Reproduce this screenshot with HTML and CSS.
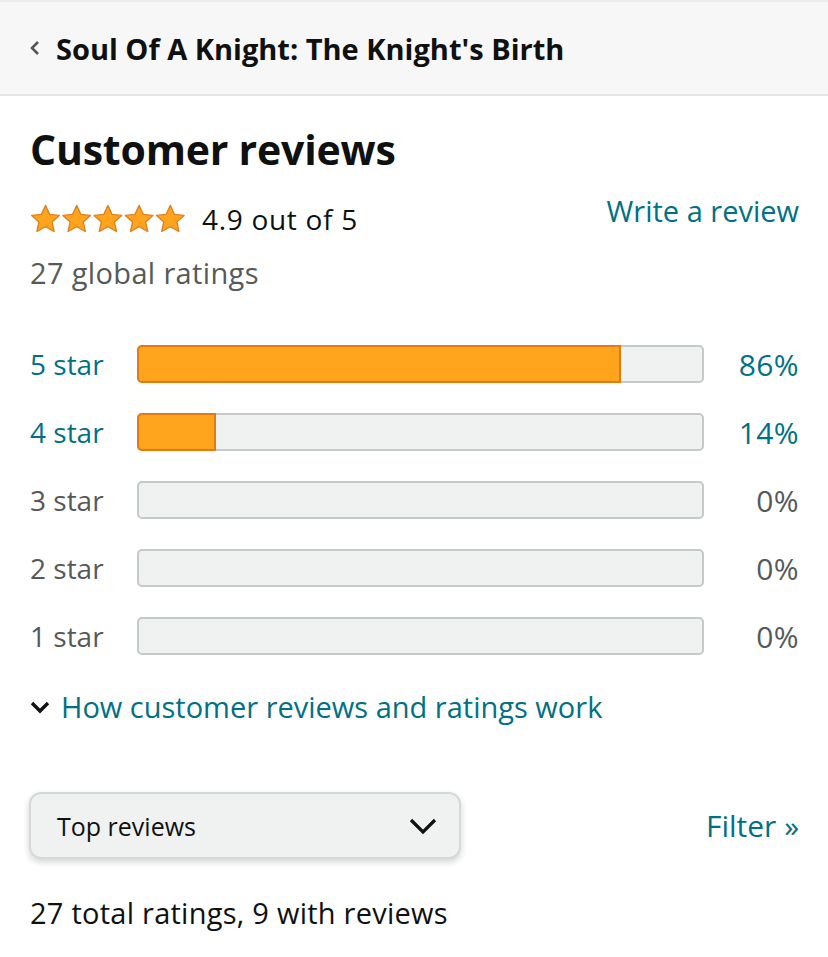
FILE: index.html
```html
<!DOCTYPE html>
<html>
<head>
<meta charset="utf-8">
<link rel="stylesheet" href="styles.css">
</head>
<body>
<header class="topbar">
  <svg class="back" width="12" height="18" viewBox="0 0 12 18"><path d="M9 3 L3 9 L9 15" fill="none" stroke="#555" stroke-width="2.6"/></svg>
  <span class="topbar-title">Soul Of A Knight: The Knight's Birth</span>
</header>
<main class="content">
  <h1 class="heading">Customer reviews</h1>
  <div class="summary">
    <div class="summary-left">
      <div class="rating-line">
        <span class="stars">
          <svg width="156" height="31" viewBox="0 0 156 31">
            <defs>
              <path id="st" d="M15.5 1.5 L19.6 10.4 L29.3 11.4 L22 17.9 L24.1 27.5 L15.5 22.6 L6.9 27.5 L9 17.9 L1.7 11.4 L11.4 10.4 Z"/>
            </defs>
            <use href="#st" x="0" fill="#ffa41c" stroke="#e0801e" stroke-width="1.4" stroke-linejoin="round"/>
            <use href="#st" x="31.2" fill="#ffa41c" stroke="#e0801e" stroke-width="1.4" stroke-linejoin="round"/>
            <use href="#st" x="62.4" fill="#ffa41c" stroke="#e0801e" stroke-width="1.4" stroke-linejoin="round"/>
            <use href="#st" x="93.6" fill="#ffa41c" stroke="#e0801e" stroke-width="1.4" stroke-linejoin="round"/>
            <use href="#st" x="124.8" fill="#ffa41c" stroke="#e0801e" stroke-width="1.4" stroke-linejoin="round"/>
          </svg>
        </span>
        <span class="rating-text">4.9 out of 5</span>
      </div>
      <div class="global">27 global ratings</div>
    </div>
    <a class="link write">Write a review</a>
  </div>

  <div class="bars">
    <div class="row link-row"><span class="label">5 star</span><div class="track"><div class="fill" style="width:86%"></div></div><span class="pct">86%</span></div>
    <div class="row link-row"><span class="label">4 star</span><div class="track"><div class="fill" style="width:14%"></div></div><span class="pct">14%</span></div>
    <div class="row"><span class="label">3 star</span><div class="track"></div><span class="pct">0%</span></div>
    <div class="row"><span class="label">2 star</span><div class="track"></div><span class="pct">0%</span></div>
    <div class="row"><span class="label">1 star</span><div class="track"></div><span class="pct">0%</span></div>
  </div>

  <div class="how">
    <svg width="20" height="16" viewBox="0 0 20 16"><path d="M2 4 L10 12 L18 4" fill="none" stroke="#111" stroke-width="3.4"/></svg>
    <span class="link">How customer reviews and ratings work</span>
  </div>

  <div class="sortbar">
    <div class="dropdown">
      <span>Top reviews</span>
      <svg width="28" height="18" viewBox="0 0 28 18"><path d="M2 3 L14 15 L26 3" fill="none" stroke="#111" stroke-width="3.2"/></svg>
    </div>
    <a class="link filter">Filter »</a>
  </div>

  <div class="total">27 total ratings, 9 with reviews</div>
</main>
</body>
</html>
```
FILE: styles.css
```css
* { box-sizing: border-box; }
html, body { margin: 0; padding: 0; background: #fff; }
body {
  font-family: "Open Sans", "Noto Sans", sans-serif;
  color: #0f1111;
  width: 828px;
}
.topbar {
  height: 96px;
  background: #f7f7f7;
  border-bottom: 2px solid #e3e6e6;
  border-top: 2px solid #ececec;
  display: flex;
  align-items: center;
  padding-left: 29px;
  gap: 15px;
}
.back { flex: none; }
.topbar-title {
  font-size: 29px;
  font-weight: 700;
  letter-spacing: 0;
  color: #0f1111;
}
.content { padding: 0 29px 0 30px; }
.heading {
  margin: 0;
  padding-top: 27px;
  font-size: 41px;
  font-weight: 700;
  line-height: 52px;
  letter-spacing: -0.2px;
}
.summary {
  display: flex;
  justify-content: space-between;
  align-items: flex-start;
  margin-top: 26px;
}
.rating-line {
  display: flex;
  align-items: center;
  gap: 16px;
  height: 36px;
}
.stars svg { display: block; }
.rating-text { font-size: 28px; letter-spacing: 0.7px; color: #0f1111; line-height: 36px; }
.global { font-size: 29px; letter-spacing: 0.35px; color: #565959; margin-top: 18px; line-height: 36px; }
.link { color: #007185; text-decoration: none; }
.write { font-size: 29px; line-height: 36px; margin-top: -8px; }
.bars { margin-top: 54px; display: flex; flex-direction: column; gap: 30px; }
.row { display: flex; align-items: center; height: 38px; }
.label { width: 107px; font-size: 28px; color: #565959; letter-spacing: 0; }
.pct { width: 95px; text-align: right; font-size: 30px; color: #565959; letter-spacing: 0.4px; }
.link-row .label, .link-row .pct { color: #007185; }
.track {
  flex: 1;
  height: 38px;
  background: #f0f2f2;
  border: 2px solid #c6c9c9;
  border-radius: 5px;
  display: flex;
}
.fill {
  flex: none;
  background: #ffa41c;
  margin: -2px 0 -2px -2px;
  height: calc(100% + 4px);
  border: 2px solid #e47911;
  border-radius: 5px 0 0 5px;
}
.how {
  display: flex;
  align-items: center;
  gap: 11px;
  margin-top: 34px;
  font-size: 29px;
  line-height: 36px;
}
.how svg { flex: none; }
.sortbar {
  display: flex;
  justify-content: space-between;
  align-items: center;
  margin-top: 67px;
}
.dropdown {
  width: 432px;
  height: 67px;
  margin-left: -1px;
  background: #f0f2f2;
  border: 2px solid #d5d9d9;
  border-radius: 12px;
  box-shadow: 0 3px 6px rgba(15,17,17,0.18);
  display: flex;
  align-items: center;
  justify-content: space-between;
  padding: 0 22px 0 26px;
  font-size: 25px;
}
.filter { font-size: 30px; line-height: 36px; }
.total { margin-top: 36px; font-size: 29px; letter-spacing: 0.25px; line-height: 36px; color: #0f1111; }
```
